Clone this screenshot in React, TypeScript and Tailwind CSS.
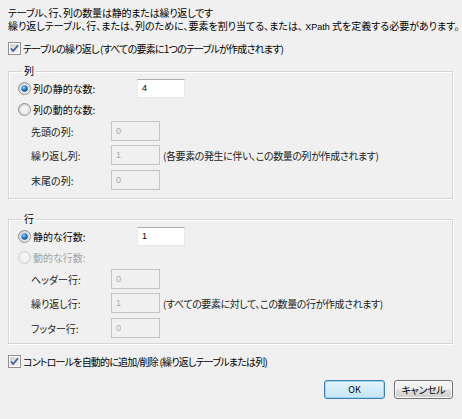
import React from "react"

const font = "font-['Noto_Sans_CJK_JP','Noto_Sans',sans-serif] [font-feature-settings:'palt']"

const CheckBox = () => (
  <svg width="13" height="13" viewBox="0 0 13 13" className="shrink-0">
    <defs>
      <linearGradient id="cbg" x1="0" y1="0" x2="1" y2="1">
        <stop offset="0" stopColor="#cbcfd5" />
        <stop offset="1" stopColor="#f6f6f6" />
      </linearGradient>
    </defs>
    <rect x="0.5" y="0.5" width="12" height="12" fill="#fff" stroke="#8e8f8f" />
    <rect x="2" y="2" width="9" height="9" fill="url(#cbg)" />
    <path d="M3 6.5 L5.2 9 L10 3.2" fill="none" stroke="#3d5a98" strokeWidth="1.6" />
  </svg>
)

const Radio = ({ on, disabled }: { on?: boolean; disabled?: boolean }) => (
  <svg width="13" height="13" viewBox="0 0 13 13" className="shrink-0">
    <defs>
      <linearGradient id="rbg" x1="0" y1="0" x2="1" y2="1">
        <stop offset="0" stopColor="#c9cbcf" />
        <stop offset="1" stopColor="#ffffff" />
      </linearGradient>
      <radialGradient id="rdot" cx="0.4" cy="0.35" r="0.7">
        <stop offset="0" stopColor="#9fd7fb" />
        <stop offset="0.5" stopColor="#2a7ccb" />
        <stop offset="1" stopColor="#0c3f79" />
      </radialGradient>
    </defs>
    <circle cx="6.5" cy="6.5" r="6" fill={disabled ? "#f4f4f4" : "url(#rbg)"} stroke={disabled ? "#cdcdcd" : "#8e8f8f"} />
    <circle cx="6.5" cy="6.5" r="4.5" fill={disabled ? "#f4f4f4" : "#f2f2f2"} stroke={disabled ? "#e2e2e2" : "#d0d0d0"} strokeWidth="0.8" />
    {on && <circle cx="6.5" cy="6.5" r="3.2" fill="url(#rdot)" />}
  </svg>
)

const Field = ({ value, disabled }: { value: string; disabled?: boolean }) => (
  <div
    className={
      disabled
        ? "w-[49px] h-[20px] border border-[#c4c4c4] bg-[#f0f0f0] text-[#a8a8a8] text-[9px] leading-[18px] pl-[4px] font-['Liberation_Sans',sans-serif]"
        : "w-[48px] h-[19px] border border-[#e3e9ef] border-t-[#abadb3] bg-white text-black text-[9px] leading-[16px] pl-[4px] font-['Liberation_Sans',sans-serif]"
    }
  >
    {value}
  </div>
)

type Row = { label: string; value: string; note?: string; mt: string }

const SubRow = ({ label, value, note, mt }: Row) => (
  <div className={"flex items-center h-[20px] " + mt}>
    <span className="w-[93px] pl-[13px] text-[#222]">{label}</span>
    <Field value={value} disabled />
    {note && <span className="ml-[3px] text-[#222] tracking-[-0.4px] whitespace-nowrap">{note}</span>}
  </div>
)

const Group = ({
  title,
  staticLabel,
  staticValue,
  dynLabel,
  dynDisabled,
  rows,
  pb,
}: {
  title: string
  staticLabel: string
  staticValue: string
  dynLabel: string
  dynDisabled?: boolean
  rows: Row[]
  pb: string
}) => (
  <fieldset className={"w-[445px] border border-[#d5d5d5] shadow-[inset_1px_1px_0_#fff,1px_1px_0_#fff] pl-[9px] " + pb}>
    <legend className="ml-[4px] px-[2px] leading-[14px]">{title}</legend>
    <div className="flex items-center h-[20px]">
      <Radio on />
      <span className="ml-[2px] w-[104px]">{staticLabel}</span>
      <Field value={staticValue} />
    </div>
    <div className="flex items-center h-[22px]">
      <Radio disabled={dynDisabled} />
      <span className={"ml-[2px] " + (dynDisabled ? "text-[#a3a3a3]" : "")}>{dynLabel}</span>
    </div>
    <div className="flex flex-col">
      {rows.map((r) => (
        <SubRow key={r.label} {...r} />
      ))}
    </div>
  </fieldset>
)

export default function App() {
  return (
    <div className={"w-[462px] h-[419px] bg-[#f0f0f0] text-black text-[10px] leading-[13px] pl-[8px] pt-[6px] " + font}>
      <p className="tracking-[-0.2px] whitespace-nowrap">テーブル、行、列の数量は静的または繰り返しです</p>
      <p className="whitespace-nowrap">
        繰り返しテーブル、行、または、列のために、要素を割り当てる、または、 <span className="font-['Liberation_Sans',sans-serif] text-[9px]">XPath</span> 式を定義する必要があります。
      </p>

      <div className="flex items-center mt-[8px] h-[13px]">
        <CheckBox />
        <span className="ml-[2px] tracking-[-0.8px] whitespace-nowrap">テーブルの繰り返し (すべての要素に1つのテーブルが作成されます)</span>
      </div>

      <div className="mt-[9px]">
        <Group
          title="列"
          staticLabel="列の静的な数:"
          staticValue="4"
          dynLabel="列の動的な数:"
          pb="pb-[8px]"
          rows={[
            { label: "先頭の列:", value: "0", mt: "mt-[1px]" },
            { label: "繰り返し列:", value: "1", note: "(各要素の発生に伴い、この数量の列が作成されます)", mt: "mt-[4px]" },
            { label: "末尾の列:", value: "0", mt: "mt-[5px]" },
          ]}
        />
      </div>

      <div className="mt-[13px]">
        <Group
          title="行"
          staticLabel="静的な行数:"
          staticValue="1"
          dynLabel="動的な行数:"
          dynDisabled
          pb="pb-[5px]"
          rows={[
            { label: "ヘッダー行:", value: "0", mt: "mt-[1px]" },
            { label: "繰り返し行:", value: "1", note: "(すべての要素に対して、この数量の行が作成されます)", mt: "mt-[4px]" },
            { label: "フッター行:", value: "0", mt: "mt-[5px]" },
          ]}
        />
      </div>

      <div className="flex items-center mt-[11px] h-[13px]">
        <CheckBox />
        <span className="ml-[2px] tracking-[-0.8px] whitespace-nowrap">コントロールを自動的に追加/削除 (繰り返しテーブルまたは列)</span>
      </div>

      <div className="flex justify-end gap-[9px] w-[445px] mt-[12px]">
        <button className="w-[61px] h-[19px] rounded-[3px] border border-[#3c7fb1] bg-[linear-gradient(#e5f4fc,#c4e5f6)] text-[9px] leading-none shadow-[inset_0_0_0_1px_#9fd6f5]">
          OK
        </button>
        <button className="w-[59px] h-[19px] rounded-[3px] border border-[#707070] bg-[linear-gradient(#f2f2f2_45%,#dddddd_55%,#cfcfcf)] text-[10px] leading-none shadow-[inset_0_0_0_1px_#fcfcfc] tracking-[-0.3px]">
          キャンセル
        </button>
      </div>
    </div>
  )
}
